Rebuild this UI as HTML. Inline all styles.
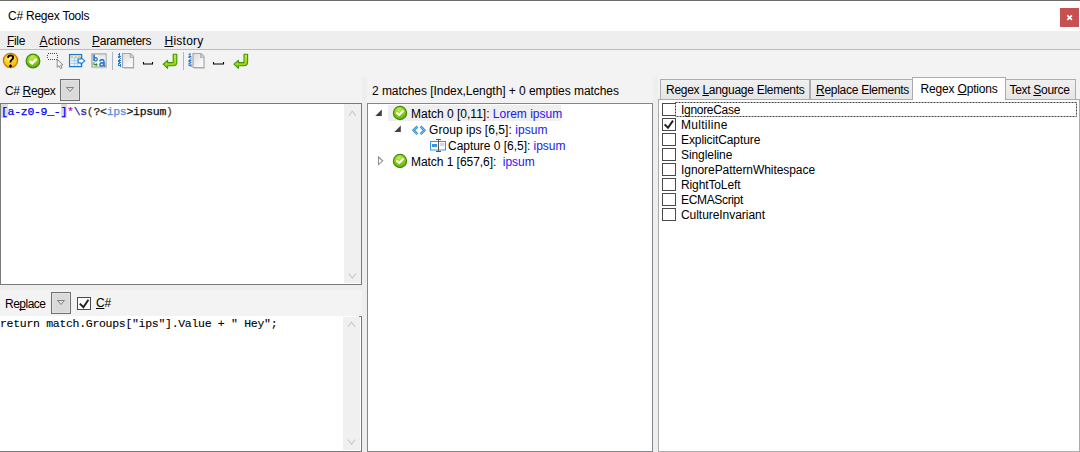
<!DOCTYPE html>
<html><head><meta charset="utf-8">
<style>
*{margin:0;padding:0;box-sizing:border-box}
html,body{width:1080px;height:452px;overflow:hidden;background:#f3f3f3;font-family:"Liberation Sans",sans-serif;font-size:12px;color:#000}
.a{position:absolute}
.t{position:absolute;white-space:nowrap;line-height:16px;font-size:12px;color:#000}
.u{text-decoration:underline;text-decoration-thickness:1px;text-underline-offset:1px;text-decoration-skip-ink:none}
.v{color:#2018f0}
.m{position:absolute;white-space:pre;font-family:"Liberation Mono",monospace;font-size:11.5px;letter-spacing:-0.3px;line-height:16px;-webkit-text-stroke:0.25px currentColor}
.cb{width:14px;height:13px;border:1px solid #4a4a4a;background:#fff}
svg{position:absolute;overflow:visible}
</style></head><body>
<!-- window top border -->
<div class="a" style="left:0;top:0;width:1080px;height:1px;background:#6b6b6b"></div>
<!-- title bar -->
<div class="a" style="left:0;top:1px;width:1080px;height:30px;background:#fff"></div>
<div class="a" style="left:1060px;top:8px;width:19px;height:19px;background:#c75050"></div>
<svg style="left:1060px;top:8px" width="19" height="19"><path d="M7.3 7.3 L11.9 11.9 M11.9 7.3 L7.3 11.9" stroke="#fff" stroke-width="1.7"/></svg>
<!-- menu bar -->
<div class="a" style="left:0;top:31px;width:1080px;height:18px;background:#eeeeee"></div>
<div class="a" style="left:0;top:49px;width:1080px;height:1px;background:#bdbdbd"></div>

<!-- toolbar icons -->
<svg style="left:0;top:0" width="260" height="76">
 <defs>
  <radialGradient id="gy" cx="0.45" cy="0.3" r="0.75"><stop offset="0" stop-color="#fff6b0"/><stop offset="0.45" stop-color="#ffd428"/><stop offset="1" stop-color="#f0a800"/></radialGradient>
  <radialGradient id="gg" cx="0.45" cy="0.25" r="0.8"><stop offset="0" stop-color="#c4ec50"/><stop offset="0.55" stop-color="#8cc81e"/><stop offset="1" stop-color="#5aa812"/></radialGradient>
  <linearGradient id="ga" x1="0" y1="0" x2="0" y2="1"><stop offset="0" stop-color="#c0f020"/><stop offset="1" stop-color="#90cc18"/></linearGradient>
  <linearGradient id="gd" x1="0" y1="0" x2="1" y2="1"><stop offset="0" stop-color="#dedede"/><stop offset="1" stop-color="#ffffff"/></linearGradient>
  <linearGradient id="gb" x1="0" y1="0" x2="0" y2="1"><stop offset="0" stop-color="#e2e2e2"/><stop offset="1" stop-color="#ffffff"/></linearGradient>
 </defs>
 <!-- help -->
 <circle cx="10.5" cy="60.5" r="7.1" fill="url(#gy)" stroke="#c87800" stroke-width="1.3"/>
 <path d="M8 57.8 Q8.2 55.4 10.6 55.4 Q13.2 55.5 13.1 57.6 Q13 59.2 11.5 60 Q10.5 60.6 10.5 62.6" fill="none" stroke="#000" stroke-width="1.9"/>
 <path d="M10.5 64.6 L11.9 66 L10.5 67.3 L9.1 66 Z" fill="#000" stroke="#000" stroke-width="0.8"/>
 <!-- check -->
 <circle cx="33" cy="61" r="6.8" fill="url(#gg)" stroke="#3e8e0c" stroke-width="1.3"/>
 <path d="M29.6 61 L32.2 63.4 L36.6 58.8" fill="none" stroke="#fff" stroke-width="2.4"/>
 <!-- dotted select -->
 <path d="M48 53h1v1h-1z M48 59h1v1h-1z M50 53h1v1h-1z M50 59h1v1h-1z M52 53h1v1h-1z M52 59h1v1h-1z M54 53h1v1h-1z M54 59h1v1h-1z M56 53h1v1h-1z M56 59h1v1h-1z M47 55h1v1h-1z M57 55h1v1h-1z M47 57h1v1h-1z M57 57h1v1h-1z" fill="#4a4a4a"/>
 <path d="M57.2 59.2 L57.2 67.4 L59.1 65.8 L60.6 68.6 L62.1 67.9 L60.7 65.1 L63 64.9 Z" fill="#f4f4f4" stroke="#8c8c8c" stroke-width="1"/>
 <!-- table arrow -->
 <rect x="69.6" y="54.6" width="12" height="12" fill="#fff" stroke="#1a7ac8" stroke-width="1.3"/>
 <rect x="70.5" y="57.5" width="10" height="8.5" fill="#eaf4fc"/>
 <path d="M71 56.8 H73.2 M74.6 56.8 H76.8 M78.2 56.8 H80.4" stroke="#f0a828" stroke-width="1.3"/>
 <path d="M70.5 57.8 H80.5 M70.5 60.6 H80.5 M70.5 63.4 H80.5 M74.5 57.5 V66 M77.5 57.5 V66" stroke="#a6cdec" stroke-width="1"/>
 <path d="M78.2 59 L81 59 L81 57.6 L84.8 60.9 L81 64.2 L81 62.8 L78.2 62.8 Z" fill="#ffffff" stroke="#1a7ac8" stroke-width="1.1" stroke-linejoin="round"/>
 <!-- b a -->
 <rect x="92" y="54" width="14" height="13" fill="#fff" stroke="#a0a0a0" stroke-width="1.3"/><rect x="92" y="67.6" width="14.5" height="0.8" fill="#d4d4d4"/>
 <rect x="97.5" y="54.6" width="8" height="7.6" fill="url(#gb)"/>
 <path d="M93.2 54.8 H95 V61 H93.2 Z" fill="#2a7ad0"/>
 <path d="M94.6 58.6 Q95.4 57.3 96.3 57.6 Q97.3 58 97.2 59.4 Q97.1 61 95.6 61 Q94.8 61 94.4 60.4" fill="none" stroke="#2a7ad0" stroke-width="1.3"/>
 <path d="M99.6 61.3 Q100.4 59.6 102.2 59.6 Q104 59.8 104 61.6 V65.4 L105.2 66 M103.8 62.6 Q100.2 62.6 99.9 64.4 Q99.9 66.1 101.6 66 Q103 65.8 103.8 64.6" fill="none" stroke="#2a7ad0" stroke-width="1.6"/>
 <path d="M93.9 62 V64.6 H97 M95.8 63.3 L97.1 64.6 L95.8 65.9" fill="none" stroke="#2a9a18" stroke-width="1.1"/>
 <!-- separator -->
 <rect x="112" y="52" width="1" height="18" fill="#aab8c6"/>
 <!-- doc 1 -->
 <g id="doc">
 <path d="M119 53h1v1h-1z M118 54h1v1h-1z M119 54h1v1h-1z M119 55h1v1h-1z M118 56h1v1h-1z M119 56h1v1h-1z M120 56h1v1h-1z M118 57h1v1h-1z M119 57h1v1h-1z M120 58h1v1h-1z M119 59h1v1h-1z M118 60h1v1h-1z M119 60h1v1h-1z M120 60h1v1h-1z M118 61h1v1h-1z M119 61h1v1h-1z M119 62h1v1h-1z M120 62h1v1h-1z M118 63h1v1h-1z M119 63h1v1h-1z M118 64h1v1h-1z M120 64h1v1h-1z M118 65h1v1h-1z M119 65h1v1h-1z M120 65h1v1h-1z M120 66h1v1h-1z" fill="#2a7ac8"/>
 <rect x="123.5" y="68" width="11" height="1" fill="#d0d0d0"/>
 <path d="M122.5 53.5 H130.6 L133.5 56.4 V67.5 H122.5 Z" fill="url(#gd)" stroke="#a8a8a8" stroke-width="1.2"/>
 <path d="M130.2 54.2 V57.2 H133" fill="none" stroke="#a0a0a0" stroke-width="1.1"/>
 </g>
 <!-- space -->
 <path d="M143.5 62 V64 H152.5 V62" fill="none" stroke="#000" stroke-width="1.1"/>
 <!-- return arrow -->
 <path d="M173.2 54.2 H176.8 V62 Q176.8 65.8 173 65.8 H167.6 V68.3 L163.2 64.2 L167.6 60.4 V62.6 H173.2 Z" fill="url(#ga)" stroke="#3c960c" stroke-width="1.1" stroke-linejoin="round"/>
 <!-- separator -->
 <rect x="183" y="52" width="1" height="18" fill="#aab8c6"/>
 <use href="#doc" x="70.5"/>
 <path d="M213.5 62 V64 H223.5 V62" fill="none" stroke="#000" stroke-width="1.1"/>
 <path d="M244 54.2 H247.6 V62 Q247.6 65.8 243.8 65.8 H238.4 V68.3 L234 64.2 L238.4 60.4 V62.6 H244 Z" fill="url(#ga)" stroke="#3c960c" stroke-width="1.1" stroke-linejoin="round"/>
</svg>

<!-- LEFT PANEL -->
<div class="a" style="left:60px;top:79px;width:20px;height:22px;background:#dadada;border:1px solid #707070;box-shadow:inset 0 0 0 1px #e2e2e2"></div>
<svg style="left:60px;top:79px" width="20" height="22"><path d="M6.5 8.5 H13.5 L10 12.5 Z" fill="#e0e0e0" stroke="#808080" stroke-width="1" stroke-linejoin="round"/></svg>

<!-- editor 1 -->
<div class="a" style="left:0;top:103px;width:362px;height:182px;background:#fff;border:1px solid #7a7a7a"></div>
<div class="a" style="left:344px;top:104px;width:17px;height:179px;background:#f0f0f0"></div>
<svg style="left:344px;top:104px" width="17" height="180"><path d="M4.8 11.6 L8.3 7.1 L11.8 11.6" fill="none" stroke="#c9c9c9" stroke-width="1.1"/><path d="M4.8 169.6 L8.3 174.1 L11.8 169.6" fill="none" stroke="#c9c9c9" stroke-width="1.1"/></svg>
<div class="a" style="left:1px;top:104px;width:7px;height:14px;background:#dcdcdc"></div>
<div class="a" style="left:61px;top:104px;width:6px;height:14px;background:#dcdcdc"></div>
<div class="m" style="left:1px;top:104px"><span style="color:#0000ff">[a-z0-9_-]</span><span style="color:#b020c0">*</span><span style="color:#2a1aa8">\s</span><span style="color:#6a3a10">(</span><span style="color:#202020">?&lt;</span><span style="color:#5a8ce8">ips</span><span style="color:#101010">&gt;ipsum</span><span style="color:#6a3a10">)</span></div>

<!-- horizontal splitter + replace row -->
<div class="a" style="left:0;top:285px;width:362px;height:5px;background:#eeeeee"></div>
<div class="a" style="left:51px;top:292px;width:20px;height:22px;background:#dadada;border:1px solid #707070;box-shadow:inset 0 0 0 1px #e2e2e2"></div>
<svg style="left:51px;top:292px" width="20" height="22"><path d="M6.5 8.5 H13.5 L10 12.5 Z" fill="#e0e0e0" stroke="#808080" stroke-width="1" stroke-linejoin="round"/></svg>
<div class="a cb" style="left:77px;top:297px;width:14px;height:13px"></div>
<svg style="left:77px;top:297px" width="14" height="13"><path d="M2.8 6.6 L6.4 10.2 L11.4 2.8" fill="none" stroke="#222" stroke-width="2"/></svg>

<!-- editor 2 -->
<div class="a" style="left:0;top:316px;width:362px;height:136px;background:#fff;border-right:1px solid #7a7a7a;border-bottom:1px solid #7a7a7a"></div>
<div class="a" style="left:359px;top:316px;width:2px;height:1px;background:#7a7a7a"></div>
<div class="a" style="left:343px;top:317px;width:17px;height:133px;background:#f0f0f0"></div>
<svg style="left:343px;top:317px" width="17" height="133"><path d="M5 9.6 L8.5 5.2 L12 9.6" fill="none" stroke="#c9c9c9" stroke-width="1.1"/><path d="M5 122.6 L8.5 127.1 L12 122.6" fill="none" stroke="#c9c9c9" stroke-width="1.1"/></svg>
<div class="m" style="left:0px;top:316px;color:#000;-webkit-text-stroke:0.1px #000">return match.Groups["ips"].Value + " Hey";</div>

<!-- vertical splitters -->
<div class="a" style="left:362px;top:77px;width:5px;height:375px;background:#eeeeee"></div>
<div class="a" style="left:653px;top:77px;width:5px;height:375px;background:#eeeeee"></div>

<!-- MIDDLE PANEL -->
<div class="a" style="left:367px;top:103px;width:286px;height:349px;background:#fff;border:1px solid #828790"></div>
<div class="a" style="left:388px;top:105px;width:173px;height:16px;background:#efefef"></div>
<svg style="left:0;top:0" width="1080" height="452">
 <defs>
  <radialGradient id="gg2" cx="0.45" cy="0.25" r="0.8"><stop offset="0" stop-color="#c4ec50"/><stop offset="0.55" stop-color="#8cc81e"/><stop offset="1" stop-color="#5aa812"/></radialGradient>
 </defs>
 <path d="M375.3 116 L381.8 109.6 V116 Z" fill="#404040"/>
 <path d="M394.4 132 L400.8 125.6 V132 Z" fill="#404040"/>
 <path d="M378.5 157 L382.7 160.8 L378.5 164.6 Z" fill="none" stroke="#909090" stroke-width="1.1"/>
 <circle cx="400" cy="113" r="6.6" fill="url(#gg2)" stroke="#3e8e0c" stroke-width="1.2"/>
 <path d="M396.4 112.6 L399.2 115 L403.6 110.6" fill="none" stroke="#fff" stroke-width="2"/>
 <circle cx="400" cy="161" r="6.6" fill="url(#gg2)" stroke="#3e8e0c" stroke-width="1.2"/>
 <path d="M396.4 160.6 L399.2 163 L403.6 158.6" fill="none" stroke="#fff" stroke-width="2"/>
 <!-- group icon -->
 <path d="M417.4 126.4 L413.6 130.3 L417.4 134.2 M420.6 126.4 L424.4 130.3 L420.6 134.2" fill="none" stroke="#2a8ad0" stroke-width="2.4" stroke-linejoin="miter"/><path d="M417.4 126.4 L413.6 130.3 L417.4 134.2 M420.6 126.4 L424.4 130.3 L420.6 134.2" fill="none" stroke="#d8ecfa" stroke-width="0.6"/>
 <!-- capture icon -->
 <rect x="430.5" y="141.5" width="15" height="8.5" fill="#fff" stroke="#3a96dc" stroke-width="1"/>
 <rect x="432" y="144" width="5" height="3" fill="#3a96dc"/>
 <rect x="440" y="143" width="4.5" height="3" fill="#d8d8d8"/>
 <path d="M438.5 139.5 V151.5 M436 139.5 H441 M436 151.5 H441" stroke="#555" stroke-width="1" fill="none"/>
</svg>

<!-- RIGHT PANEL -->
<div class="a" style="left:660px;top:79px;width:150px;height:21px;background:linear-gradient(#f0f0f0,#e5e5e5);border:1px solid #acacac;border-bottom:none"></div>
<div class="a" style="left:810px;top:79px;width:103px;height:21px;background:linear-gradient(#f0f0f0,#e5e5e5);border:1px solid #acacac;border-bottom:none"></div>
<div class="a" style="left:1005px;top:79px;width:71px;height:21px;background:linear-gradient(#f0f0f0,#e5e5e5);border:1px solid #acacac;border-bottom:none"></div>
<div class="a" style="left:658px;top:99px;width:422px;height:353px;background:#fff;border:1px solid #acacac"></div>
<div class="a" style="left:912px;top:77px;width:94px;height:23px;background:#fff;border:1px solid #acacac;border-bottom:none"></div>

<!-- focus rect -->

<div class="a cb" style="left:662px;top:103px"></div>
<div class="a cb" style="left:662px;top:118px"></div>
<div class="a cb" style="left:662px;top:133px"></div>
<div class="a cb" style="left:662px;top:148px"></div>
<div class="a cb" style="left:662px;top:163px"></div>
<div class="a cb" style="left:662px;top:178px"></div>
<div class="a cb" style="left:662px;top:193px"></div>
<div class="a cb" style="left:662px;top:208px"></div>
<svg style="left:662px;top:118px" width="13" height="13"><path d="M2.6 6.4 L6 9.8 L11 2.6" fill="none" stroke="#222" stroke-width="2"/></svg>

<svg style="left:0;top:0" width="1080" height="452"><path d="M675.5 103 V116" stroke="#fff" stroke-width="1"/><path d="M675.5 102.5 H1076.5 V116.5 H675.5 Z" fill="none" stroke="#444" stroke-width="1" stroke-dasharray="2 1"/></svg>
<div class="t" style="left:8px;top:8px;letter-spacing:-0.23px;">C# Regex Tools</div>
<div class="t" style="left:7px;top:33px;letter-spacing:-0.33px;"><span class="u">F</span>ile</div>
<div class="t" style="left:39.5px;top:33px;letter-spacing:0.15px;"><span class="u">A</span>ctions</div>
<div class="t" style="left:92px;top:33px;letter-spacing:-0.28px;"><span class="u">P</span>arameters</div>
<div class="t" style="left:164.5px;top:33px;letter-spacing:0.25px;"><span class="u">H</span>istory</div>
<div class="t" style="left:5px;top:83px;letter-spacing:-0.36px;">C# <span class="u">R</span>egex</div>
<div class="t" style="left:5px;top:296px;letter-spacing:-0.5px;">Re<span class="u">p</span>lace</div>
<div class="t" style="left:96px;top:295px;letter-spacing:-0.3px;"><span class="u">C</span>#</div>
<div class="t" style="left:372px;top:83px;letter-spacing:-0.05px;">2 matches [Index,Length] + 0 empties matches</div>
<div class="t" style="left:411px;top:106px;letter-spacing:0.0px;">Match 0 [0,11]: <span class="v">Lorem ipsum</span></div>
<div class="t" style="left:429px;top:122px;letter-spacing:0.05px;">Group ips [6,5]: <span class="v">ipsum</span></div>
<div class="t" style="left:448px;top:138px;letter-spacing:-0.03px;">Capture 0 [6,5]: <span class="v">ipsum</span></div>
<div class="t" style="left:411px;top:154px;letter-spacing:-0.05px;">Match 1 [657,6]:&nbsp; <span class="v">ipsum</span></div>
<div class="t" style="left:666px;top:82px;letter-spacing:-0.27px;">Regex <span class="u">L</span>anguage Elements</div>
<div class="t" style="left:816px;top:82px;letter-spacing:-0.27px;"><span class="u">R</span>eplace Elements</div>
<div class="t" style="left:920.5px;top:81px;letter-spacing:-0.17px;">Regex <span class="u">O</span>ptions</div>
<div class="t" style="left:1009.5px;top:82px;letter-spacing:-0.3px;">Text <span class="u">S</span>ource</div>
<div class="t" style="left:681px;top:102px;letter-spacing:-0.3px;">IgnoreCase</div>
<div class="t" style="left:681px;top:117px;letter-spacing:0.29px;">Multiline</div>
<div class="t" style="left:681px;top:132px;letter-spacing:-0.1px;">ExplicitCapture</div>
<div class="t" style="left:681px;top:147px;letter-spacing:-0.08px;">Singleline</div>
<div class="t" style="left:681px;top:162px;letter-spacing:-0.06px;">IgnorePatternWhitespace</div>
<div class="t" style="left:681px;top:177px;letter-spacing:-0.12px;">RightToLeft</div>
<div class="t" style="left:681px;top:192px;letter-spacing:-0.34px;">ECMAScript</div>
<div class="t" style="left:681px;top:207px;letter-spacing:-0.05px;">CultureInvariant</div>
</body></html>
